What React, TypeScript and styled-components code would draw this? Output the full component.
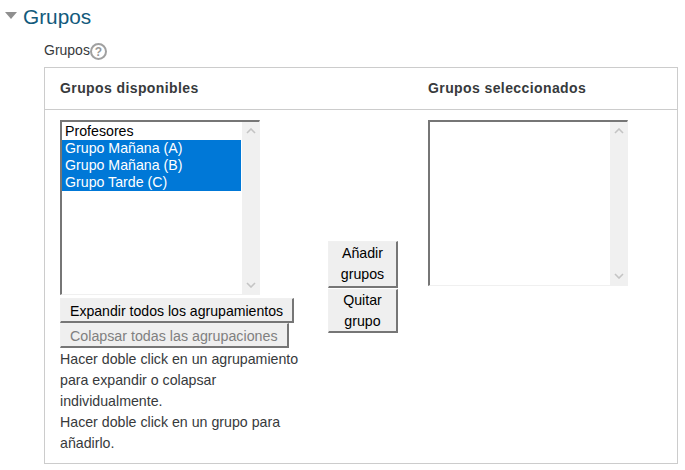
import React from "react";
import styled, { createGlobalStyle } from "styled-components";

const GlobalStyle = createGlobalStyle`
  html, body {
    margin: 0;
    padding: 0;
    background: #fff;
    font-family: "Liberation Sans", Arial, sans-serif;
  }
`;

function ScrollArrow(props: { up?: boolean }) {
  return (
    <svg width="10" height="6" viewBox="0 0 10 6">
      <path
        d={props.up ? "M1 5 L5 1 L9 5" : "M1 1 L5 5 L9 1"}
        fill="none"
        stroke="#c4c4c4"
        strokeWidth="1.6"
      />
    </svg>
  );
}

function ListBox(props: { height: number; children?: React.ReactNode }) {
  return (
    <ListFrame $height={props.height}>
      <ListItems>{props.children}</ListItems>
      <ScrollTrack>
        <ScrollArrow up />
        <ScrollArrow />
      </ScrollTrack>
    </ListFrame>
  );
}

export default function App() {
  return (
    <Page>
      <GlobalStyle />
      <SectionHeader>
        <Caret />
        <SectionTitle>Grupos</SectionTitle>
      </SectionHeader>
      <FieldLabel>
        Grupos
        <HelpIcon>?</HelpIcon>
      </FieldLabel>
      <Panel>
        <PanelHead>
          <HeadLeft>Grupos disponibles</HeadLeft>
          <HeadRight>Grupos seleccionados</HeadRight>
        </PanelHead>
        <PanelBody>
          <LeftColumn>
            <ListBox height={175}>
              <Option>Profesores</Option>
              <Option $selected>Grupo Mañana (A)</Option>
              <Option $selected>Grupo Mañana (B)</Option>
              <Option $selected>Grupo Tarde (C)</Option>
            </ListBox>
            <WideButton>Expandir todos los agrupamientos</WideButton>
            <WideButton $disabled>Colapsar todas las agrupaciones</WideButton>
            <HelpText>
              Hacer doble click en un agrupamiento para expandir o colapsar
              individualmente.
              <br />
              Hacer doble click en un grupo para añadirlo.
            </HelpText>
          </LeftColumn>
          <MiddleColumn>
            <MoveButton $tall>Añadir grupos</MoveButton>
            <MoveButton>Quitar grupo</MoveButton>
          </MiddleColumn>
          <RightColumn>
            <ListBox height={166} />
          </RightColumn>
        </PanelBody>
      </Panel>
    </Page>
  );
}

const Page = styled.div`
  width: 685px;
  height: 470px;
  box-sizing: border-box;
  padding: 5px 8px 0 4px;
  overflow: hidden;
`;
const SectionHeader = styled.div`
  display: flex;
  align-items: center;
  height: 24px;
`;
const Caret = styled.span`
  width: 0;
  height: 0;
  margin: 0 6px 4px 1px;
  border-left: 6px solid transparent;
  border-right: 6px solid transparent;
  border-top: 7px solid #8f8f8f;
`;
const SectionTitle = styled.h3`
  margin: 0;
  font-size: 20.8px;
  font-weight: 400;
  color: #125a7c;
`;
const FieldLabel = styled.div`
  display: flex;
  align-items: center;
  height: 20px;
  margin: 11px 0 7px 40px;
  font-size: 14px;
  color: #373a3c;
`;
const HelpIcon = styled.span`
  display: inline-flex;
  align-items: center;
  justify-content: center;
  box-sizing: border-box;
  width: 17px;
  height: 17px;
  margin: 3px 0 0 0;
  border: 2px solid #a0a0a0;
  border-radius: 50%;
  font-size: 12px;
  font-weight: 700;
  color: #999;
`;
const Panel = styled.div`
  box-sizing: border-box;
  width: 634px;
  height: 397px;
  margin-left: 40px;
  border: 1px solid #ccc;
`;
const PanelHead = styled.div`
  display: grid;
  grid-template-columns: 368px 1fr;
  align-items: center;
  height: 42px;
  padding: 0 0 2px 15px;
  box-sizing: border-box;
  border-bottom: 1px solid #ccc;
  font-size: 14px;
  font-weight: 700;
  letter-spacing: 0.4px;
  color: #373a3c;
`;
const HeadLeft = styled.div``;
const HeadRight = styled.div``;
const PanelBody = styled.div`
  display: flex;
  padding: 10px 0 0 15px;
`;
const LeftColumn = styled.div`
  display: flex;
  flex-direction: column;
  align-items: flex-start;
  width: 268px;
`;
const MiddleColumn = styled.div`
  display: flex;
  flex-direction: column;
  gap: 1px;
  width: 100px;
  padding-top: 121px;
`;
const RightColumn = styled.div`
  width: 200px;
`;
const ListFrame = styled.div<{ $height: number }>`
  display: flex;
  box-sizing: border-box;
  width: 200px;
  height: ${({ $height }) => $height}px;
  border-style: solid;
  border-width: 2px 1px 1px 2px;
  border-color: #767676 #f0f0f0 #f0f0f0 #767676;
  background: #fff;
`;
const ListItems = styled.div`
  flex: 1;
  margin-right: 1px;
  padding-top: 1px;
`;
const Option = styled.div<{ $selected?: boolean }>`
  height: 17px;
  padding: 0 3px;
  font-size: 14.2px;
  line-height: 17px;
  color: ${({ $selected }) => ($selected ? "#fff" : "#000")};
  background: ${({ $selected }) => ($selected ? "#0078d7" : "transparent")};
`;
const ScrollTrack = styled.div`
  display: flex;
  flex-direction: column;
  align-items: center;
  justify-content: space-between;
  box-sizing: border-box;
  width: 17px;
  padding: 6px 0;
  background: #f0f0f0;
`;
const buttonBorder = `
  border-style: solid;
  border-width: 1px 2px 2px 1px;
  border-color: #f0f0f0 #767676 #767676 #f0f0f0;
  background: #efefef;
  font-family: "Liberation Sans", Arial, sans-serif;
`;
const WideButton = styled.button<{ $disabled?: boolean }>`
  ${buttonBorder}
  box-sizing: border-box;
  height: 25px;
  padding: 2px 9px 0;
  white-space: nowrap;
  font-size: ${({ $disabled }) => ($disabled ? "14.25px" : "14.1px")};
  color: ${({ $disabled }) => ($disabled ? "#808080" : "#000")};
  &:first-of-type {
    margin-top: 3px;
  }
`;
const MoveButton = styled.button<{ $tall?: boolean }>`
  ${buttonBorder}
  box-sizing: border-box;
  width: 70px;
  height: ${({ $tall }) => ($tall ? "47px" : "44px")};
  padding: 0 8px ${({ $tall }) => ($tall ? "0" : "3px")};
  font-size: 14.2px;
  line-height: 21px;
  color: #000;
`;
const HelpText = styled.div`
  width: 245px;
  margin-top: 1px;
  font-size: 14.2px;
  line-height: 21px;
  color: #373a3c;
`;
